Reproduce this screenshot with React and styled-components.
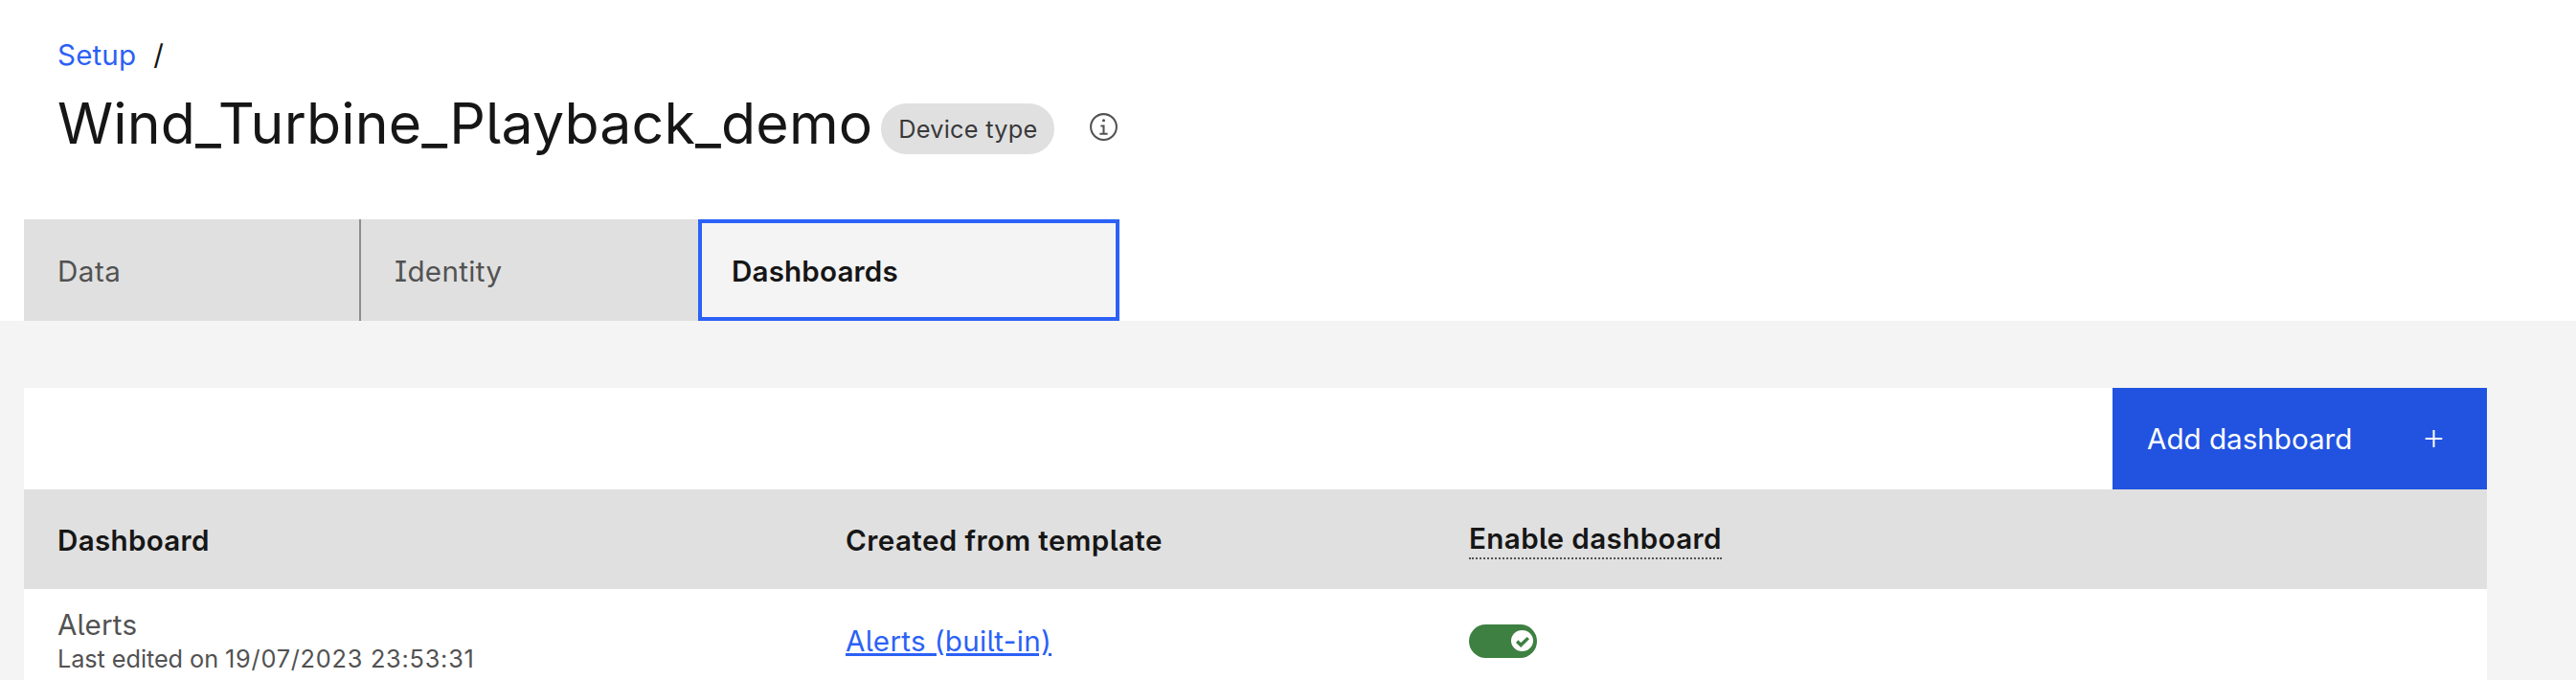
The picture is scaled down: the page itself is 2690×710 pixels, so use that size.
import React from "react";
import styled, { createGlobalStyle } from "styled-components";

const GlobalStyle = createGlobalStyle`
  *, *::before, *::after { box-sizing: border-box; }
  body {
    margin: 0;
    background: #f4f4f4;
    font-family: Inter, "Liberation Sans", sans-serif;
    font-size: 29.6px;
    line-height: 36px;
    color: #161616;
    font-feature-settings: "cv08" 1, "cv05" 1;
  }
`;

const Page = styled.div`
  height: 710px;
  overflow: hidden;
`;

const Header = styled.header`
  display: flex;
  flex-direction: column;
  height: 335px;
  padding: 39px 25px 0;
  background: #fff;
`;

const Breadcrumb = styled.nav`
  display: flex;
  gap: 18px;
  padding-left: 35px;
`;

const BreadcrumbLink = styled.a`
  color: #2b61f6;
  text-decoration: none;
  letter-spacing: 0.14px;
`;

const TitleRow = styled.div`
  display: flex;
  align-items: center;
  height: 72px;
  margin-top: 18px;
  padding-left: 35px;
`;

const Title = styled.h1`
  margin: 0;
  font-size: 59px;
  font-weight: 400;
  line-height: 72px;
  letter-spacing: 0.15px;
`;

const Tag = styled.span`
  height: 53px;
  margin: 11px 0 0 9px;
  padding: 0 18px;
  border-radius: 27px;
  background: #e0e0e0;
  color: #393939;
  font-size: 25.3px;
  line-height: 53px;
  letter-spacing: 0.25px;
`;

const InfoButton = styled.button`
  display: flex;
  margin: 6px 0 0 35px;
  padding: 0;
  border: 0;
  background: none;
  color: #525252;
`;

const Tabs = styled.div`
  display: flex;
  height: 106px;
  margin-top: auto;
`;

const Tab = styled.button`
  width: ${(p) => (p.$active ? 440 : 352)}px;
  padding: ${(p) => (p.$active ? "2px 31px 0" : "2px 35px 0")};
  border: 0 solid #8d8d8d;
  border-right-width: ${(p) => (p.$divider ? 2 : 0)}px;
  background: #e0e0e0;
  color: #525252;
  font: inherit;
  font-feature-settings: inherit;
  letter-spacing: ${(p) => p.$tracking || 0}px;
  text-align: left;
  ${(p) =>
    p.$active &&
    `
    border: 4px solid #2b61f6;
    background: #f4f4f4;
    color: #161616;
    font-weight: 600;
  `}
`;

const Panel = styled.section`
  width: 2572px;
  margin: 70px 0 0 25px;
  background: #fff;
`;

const Toolbar = styled.div`
  display: flex;
  justify-content: flex-end;
  height: 106px;
`;

const PrimaryButton = styled.button`
  display: flex;
  align-items: center;
  justify-content: space-between;
  width: 391px;
  padding: 0 46px 0 36px;
  border: 0;
  background: #2153e0;
  color: #fff;
  font: inherit;
  font-feature-settings: inherit;
`;

const Row = styled.div`
  display: grid;
  grid-template-columns: 823px 651px 1fr;
  align-items: center;
  height: 109px;
`;

const HeadRow = styled(Row)`
  height: 104px;
  background: #e0e0e0;
  font-weight: 600;
`;

const Cell = styled.div`
  padding: ${(p) => p.$top || 0}px 35px ${(p) => p.$bottom || 0}px;
  color: ${(p) => p.$color || "inherit"};
  letter-spacing: ${(p) => p.$tracking || 0}px;
`;

const TooltipLabel = styled.span`
  display: inline-block;
  padding-bottom: 2px;
  border-bottom: 2px dotted #525252;
  letter-spacing: 0.37px;
`;

const DashboardName = styled.div`
  letter-spacing: 0.2px;
`;

const EditedAt = styled.div`
  margin-top: 3px;
  font-size: 25.3px;
  line-height: 30px;
  letter-spacing: -0.08px;
`;

const Timestamp = styled.time`
  letter-spacing: 0.76px;
`;

const TemplateLink = styled.a`
  color: #2b61f6;
  letter-spacing: 0.33px;
  text-decoration: underline;
  text-decoration-thickness: 3px;
  text-underline-offset: 2px;
`;

const Toggle = styled.button`
  display: flex;
  align-items: flex-start;
  justify-content: flex-end;
  width: 71px;
  height: 35px;
  padding: 6px 4px 0 0;
  border: 0;
  border-radius: 18px;
  background: #3e8041;
`;

const Knob = styled.span`
  display: flex;
  align-items: center;
  justify-content: center;
  width: 23px;
  height: 22px;
  padding-top: 2px;
  border-radius: 50%;
  background: #fff;
  color: #3e8041;
`;

const InfoIcon = () => (
  <svg width="33" height="33" viewBox="0 0 32 32" fill="currentColor">
    <path d="M17 22v-8h-4v2h2v6h-3v2h8v-2zM16 8a1.5 1.5 0 1 0 1.5 1.5A1.5 1.5 0 0 0 16 8z" />
    <path d="M16 30a14 14 0 1 1 14-14 14 14 0 0 1-14 14zm0-26a12 12 0 1 0 12 12A12 12 0 0 0 16 4z" />
  </svg>
);

const PlusIcon = () => (
  <svg width="19" height="18" viewBox="0 0 19 18" fill="none" stroke="currentColor" strokeWidth="2">
    <path d="M9.5 0v18M.7 9h17.6" />
  </svg>
);

const CheckIcon = () => (
  <svg width="14" height="11" viewBox="0 0 6 5" preserveAspectRatio="none" fill="currentColor">
    <path d="M2.2 2.7 5 0l1 1-3.8 4L0 2.7l1-1.2z" />
  </svg>
);

export default function App() {
  return (
    <Page>
      <GlobalStyle />
      <Header>
        <Breadcrumb>
          <BreadcrumbLink>Setup</BreadcrumbLink>
          <span>/</span>
        </Breadcrumb>
        <TitleRow>
          <Title>Wind_Turbine_Playback_demo</Title>
          <Tag>Device type</Tag>
          <InfoButton aria-label="Information">
            <InfoIcon />
          </InfoButton>
        </TitleRow>
        <Tabs role="tablist">
          <Tab role="tab" $divider $tracking={0.5}>Data</Tab>
          <Tab role="tab" $tracking={0.35}>Identity</Tab>
          <Tab role="tab" $active $tracking={0.15}>Dashboards</Tab>
        </Tabs>
      </Header>
      <Panel>
        <Toolbar>
          <PrimaryButton>
            Add dashboard
            <PlusIcon />
          </PrimaryButton>
        </Toolbar>
        <HeadRow>
          <Cell $top={2} $tracking={0.3}>Dashboard</Cell>
          <Cell $top={2} $tracking={0.41}>Created from template</Cell>
          <Cell $top={2}>
            <TooltipLabel>Enable dashboard</TooltipLabel>
          </Cell>
        </HeadRow>
        <Row>
          <Cell $color="#525252" $bottom={2}>
            <DashboardName>Alerts</DashboardName>
            <EditedAt>
              Last edited on <Timestamp>19/07/2023 23:53:31</Timestamp>
            </EditedAt>
          </Cell>
          <Cell $bottom={2}>
            <TemplateLink>Alerts (built-in)</TemplateLink>
          </Cell>
          <Cell>
            <Toggle role="switch" aria-checked="true" aria-label="Enable dashboard">
              <Knob>
                <CheckIcon />
              </Knob>
            </Toggle>
          </Cell>
        </Row>
      </Panel>
    </Page>
  );
}
